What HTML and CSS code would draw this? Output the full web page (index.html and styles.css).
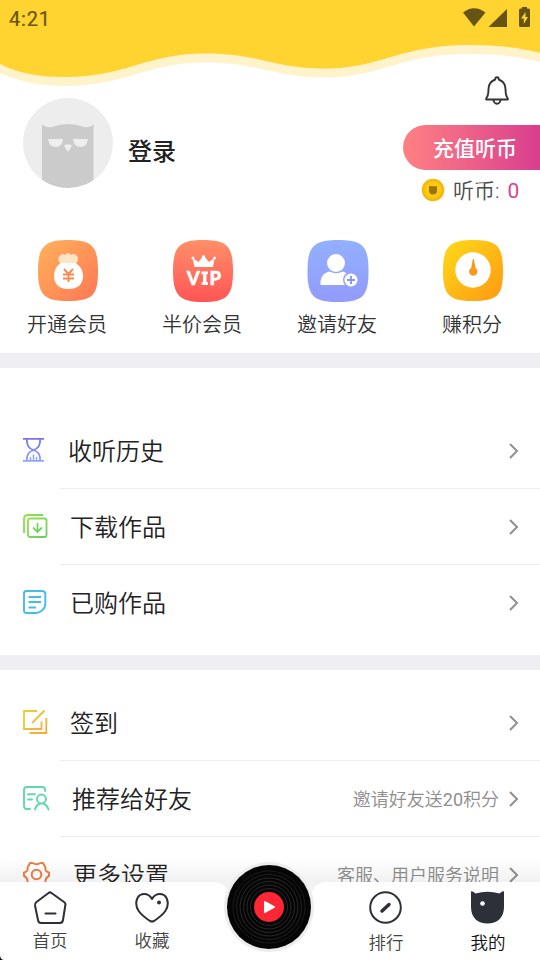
FILE: index.html
```html
<!DOCTYPE html>
<html lang="zh-CN">
<head>
<meta charset="utf-8">
<meta name="viewport" content="width=device-width">
<title>我的</title>
<link rel="stylesheet" href="styles.css">
</head>
<body>
<div class="screen">
  <header class="profile">
    <svg class="wave" width="540" height="90" viewBox="0 0 540 90">
      <path fill="#fff3cc" d="M0 0H540V62C516 56 494 54 470 54C398 54 382 77.500 325 77.500C276 77.500 258 62.500 205 62.500C145 62.500 127 86 65 86C40 86 20 82 0 73Z"/>
      <path fill="#ffd330" d="M0 0H540V53C516 47 494 45 470 45C398 45 382 68.500 325 68.500C276 68.500 258 53.500 205 53.500C145 53.500 127 77 65 77C40 77 20 74 0 64Z"/>
    </svg>
    <div class="status">
      <span class="clock">4:21</span>
      <svg width="70" height="22" viewBox="462 6 70 22" fill="#665414">
        <path d="M463 12.500Q474 4 485.500 12.500L474 26.500Z"/>
        <path d="M507 9V27H488.500Z"/>
        <path fill-rule="evenodd" d="M522 7h5v1.500h1.500q1.500 0 1.500 1.500v15.500q0 1.500-1.500 1.500h-8q-1.500 0-1.500-1.500V10q0-1.500 1.500-1.500H522ZM525.500 12L521 18.500h2.800V24L528 17h-2.500Z"/>
      </svg>
    </div>
    <div class="bell-row">
      <svg width="26" height="32" viewBox="0 0 26 32" fill="none" stroke="#333" stroke-width="1.900" stroke-linejoin="round">
        <path d="M11.200 4.500Q11.200 2.300 13 2.300T14.800 4.500Q21.500 7 21.500 14C21.500 20 22 21.500 23.800 23.300V24.500H2.200V23.300C4 21.500 4.500 20 4.500 14Q4.500 7 11.200 4.500Z"/>
        <path d="M9.500 24.500a3.500 4.200 0 0 0 7 0"/>
      </svg>
    </div>
    <div class="account">
      <svg class="avatar" width="90" height="90" viewBox="0 0 90 90">
        <defs><clipPath id="face"><circle cx="45" cy="45" r="45"/></clipPath></defs>
        <g clip-path="url(#face)">
          <path fill="#ededed" d="M0 0H90V90H0Z"/>
          <path fill="#cbcbcb" d="M19 90V26Q23 30 29 29Q45 23 61 29Q67 30 70.500 26V90Z"/>
          <path fill="#eee" d="M25 41H40Q39 49 32.500 49T25 41ZM50 41H65Q64 49 57.500 49T50 41ZM41 47.500Q45 45 49 47.500L45 54Z"/>
        </g>
      </svg>
      <h1 class="login">登录</h1>
      <div class="wallet">
        <div class="recharge">充值听币</div>
        <div class="balance">
          <svg width="24" height="24" viewBox="0 0 24 24"><circle cx="12" cy="12" r="11.300" fill="#f3b90f"/><circle cx="12" cy="12" r="8.500" fill="#ffca10"/><path fill="#98730f" d="M8 8Q12 8.500 16 8V12Q16 16.500 12 16.500T8 12Z"/></svg>
          <span class="coin-label">听币:</span><span class="coin-value">0</span>
        </div>
      </div>
    </div>
    <nav class="shortcuts">
      <a class="shortcut">
        <svg width="62" height="62" viewBox="0 0 62 62">
          <defs><linearGradient id="g1" x2="1" y2="1"><stop stop-color="#ffb25b"/><stop offset="1" stop-color="#ff7755"/></linearGradient></defs>
          <path fill="url(#g1)" d="M31 0C55 0 61 6 61 31S55 61 31 61S1 55 1 31S7 0 31 0Z"/>
          <path fill="#ffe5c5" d="M23 23Q19 17 24 15Q26 13 28 15Q31 11 34 15Q37 13 39 15Q43 18 39 24Z"/>
          <path fill="#fff" d="M23.500 23H38.500Q46 28 46 36C46 45 40 49 31.500 49S17 45 17 36Q17 28 23.500 23Z"/>
          <path fill="none" stroke="#f68a4d" stroke-width="1.900" d="M27 29L31.500 34L36 29M26 34.500H37M26 38.500H37M31.500 34V42"/>
        </svg><span>开通会员</span>
      </a>
      <a class="shortcut">
        <svg width="62" height="62" viewBox="0 0 62 62">
          <defs><linearGradient id="g2" x2="0" y2="1"><stop stop-color="#ff8f68"/><stop offset="1" stop-color="#ff5555"/></linearGradient></defs>
          <path fill="url(#g2)" d="M31 0C55 0 61 6 61 31S55 62 31 62S1 55 1 31S7 0 31 0Z"/>
          <path fill="#fff" d="M22.500 27L20.500 18L26.500 22L31.500 15.500L37 22L42.500 18L41 27Z"/><g fill="#fff"><circle cx="21" cy="18" r="1.500"/><circle cx="31.500" cy="16.500" r="1.600"/><circle cx="42.500" cy="18" r="1.500"/></g>
          <g class="vip"><text x="14.800" y="45">V</text><text x="37.500" y="45">P</text></g><path fill="#fff" d="M29.500 31.500H36V34.200H34.500V42.300H36V45H29.500V42.300H31V34.200H29.500Z"/>
        </svg><span>半价会员</span>
      </a>
      <a class="shortcut">
        <svg width="62" height="62" viewBox="0 0 62 62">
          <defs><linearGradient id="g3" x2="0" y2="1"><stop stop-color="#93b0ff"/><stop offset="1" stop-color="#929bfa"/></linearGradient></defs>
          <path fill="url(#g3)" d="M31 0C56 0 61.500 6 61.500 31S56 62 31 62S.5 56 .5 31S7 0 31 0Z"/>
          <circle cx="29" cy="23" r="9" fill="#fff"/><path fill="#fff" d="M13.500 45V41Q14.500 33 22.500 31.500Q29.500 35 35.500 31.500Q39.500 32 40.500 35V45Z"/>
          <circle cx="44" cy="40" r="8" fill="#93a3fc"/><circle cx="44" cy="40" r="6.500" fill="#fff"/><path d="M40 40h8M44 36v8" stroke="#8597f5" stroke-width="1.900"/>
        </svg><span>邀请好友</span>
      </a>
      <a class="shortcut">
        <svg width="62" height="62" viewBox="0 0 62 62">
          <defs><linearGradient id="g4" x2="1" y2="1"><stop stop-color="#ffdb19"/><stop offset="1" stop-color="#ff9812"/></linearGradient></defs>
          <path fill="url(#g4)" d="M31 0C55 0 61 6 61 31S55 61 31 61S1 55 1 31S7 0 31 0Z"/>
          <circle cx="31" cy="30" r="17.700" fill="#fff"/><path fill="#f79a1c" d="M30.800 19H31.800L33.500 28Q35.500 29 35.500 31.500A4.200 4.200 0 0 1 27 31.500Q27 29 29.200 28Z"/>
        </svg><span>赚积分</span>
      </a>
    </nav>
  </header>

  <section class="menu history">
    <a class="row">
      <svg class="icon" width="28" height="28" viewBox="0 0 28 28" fill="none" stroke="url(#m1)" stroke-width="1.800">
        <defs><linearGradient id="m1" gradientUnits="userSpaceOnUse" x1="0" y1="1" x2="0" y2="27"><stop stop-color="#7573eb"/><stop offset="1" stop-color="#91aaff"/></linearGradient></defs>
        <path d="M0 1.900L21 1.910M0 23.900L21 23.910M3.800 2C3.800 8 5 11 10.500 13C16 11 17.200 8 17.200 2M10.500 13C5 15 3.800 18 3.800 24M10.500 13C16 15 17.200 18 17.200 24"/>
        <path stroke-width="1.400" d="M7.500 24V20M10.500 24V17.500M13.500 24V20"/>
      </svg><span class="title">收听历史</span><svg class="arrow" width="12" height="18" viewBox="0 0 12 18"><path d="M2 2L9 9L2 16"/></svg>
    </a>
    <a class="row">
      <svg class="icon" width="28" height="28" viewBox="0 0 28 28" fill="none" stroke="url(#m2)" stroke-width="1.800">
        <defs><linearGradient id="m2" x2="1" y2="1"><stop stop-color="#91e344"/><stop offset="1" stop-color="#6ace65"/></linearGradient></defs>
        <rect x="5" y="5.500" width="18.500" height="18.500" rx="2"/><path d="M20 2H5Q1 2 1 6V20M14.500 10V18.500M10 14.500L14.500 19L19 14.500"/>
      </svg><span class="title t2">下载作品</span><svg class="arrow" width="12" height="18" viewBox="0 0 12 18"><path d="M2 2L9 9L2 16"/></svg>
    </a>
    <a class="row">
      <svg class="icon" width="28" height="28" viewBox="0 0 28 28" fill="none" stroke="#43bee9" stroke-width="1.900">
        <path d="M3.500 2H19Q22.300 2 22.300 5V15Q22.300 19 19 21.500Q16 24 13 24H3.500Q1 24 1 21.500V4.500Q1 2 3.500 2ZM5.500 8H18M5.500 13H18M5.500 18.500H13"/>
      </svg><span class="title t2">已购作品</span><svg class="arrow" width="12" height="18" viewBox="0 0 12 18"><path d="M2 2L9 9L2 16"/></svg>
    </a>
  </section>

  <section class="menu more">
    <a class="row">
      <svg class="icon" width="28" height="28" viewBox="0 0 28 28" fill="none" stroke="url(#m4)" stroke-width="1.800">
        <defs><linearGradient id="m4" x2="1" y2="1"><stop stop-color="#eed02e"/><stop offset="1" stop-color="#f5a83e"/></linearGradient></defs>
        <path d="M14 2H1V20H18.500V12.500M9 14L21.500 1.500M23.300 9V24H6.500"/>
      </svg><span class="title t2">签到</span><svg class="arrow" width="12" height="18" viewBox="0 0 12 18"><path d="M2 2L9 9L2 16"/></svg>
    </a>
    <a class="row">
      <svg class="icon" width="28" height="28" viewBox="0 0 28 28" fill="none" stroke="#5fd9aa" stroke-width="1.900" stroke-linecap="round">
        <path d="M7 24H4Q1 24 1 21V5Q1 2 4 2H19Q22.300 2 22.300 6M5 9.300H12M5 14.500H9M12 24.500Q13 20 17 18.500"/><circle cx="18.500" cy="14" r="4.500"/><path d="M20 18.500Q24 20 25.500 24.500"/>
      </svg><span class="title t3">推荐给好友</span><span class="note">邀请好友送<span class="digits">20</span>积分</span><svg class="arrow" width="12" height="18" viewBox="0 0 12 18"><path d="M2 2L9 9L2 16"/></svg>
    </a>
    <a class="row">
      <svg class="icon" width="28" height="28" viewBox="0 0 28 28" fill="none" stroke="#ed7e46" stroke-width="2" stroke-linejoin="round">
        <path d="M7 2H9.500Q13.500 4.500 17.500 2H20L22.500 6.500Q21.500 10.500 26 11.500V15Q22 17 22.500 21L20 25H17.500Q13.500 22.500 9.500 25H7L4.500 21Q5 17 1 15V11.500Q5.500 10.500 4.500 6.500Z"/><circle cx="13.500" cy="13.500" r="4.800"/>
      </svg><span class="title t4">更多设置</span><span class="note">客服、用户服务说明</span><svg class="arrow" width="12" height="18" viewBox="0 0 12 18"><path d="M2 2L9 9L2 16"/></svg>
    </a>
  </section>

  <footer class="tabbar">
    <div class="panel left">
      <a class="tab">
        <svg width="36" height="36" viewBox="0 0 36 36" fill="none" stroke="#2e3038" stroke-width="2" stroke-linejoin="round" stroke-linecap="round"><path d="M16.500 3Q18 1.800 19.500 3L32 12Q34 13.500 33.300 15.500L31 30Q30.500 33 28 33H9Q6.500 33 6 30L3 15.500Q2.500 13.500 4.500 12ZM13.500 23.500H23.500"/></svg><span>首页</span>
      </a>
      <a class="tab">
        <svg width="36" height="36" viewBox="0 0 36 36"><path fill="none" stroke="#2e3038" stroke-width="2" stroke-linejoin="round" d="M18 9C14 2 6 3 3.500 8C-1 18 7 25 16 31Q18 32 20 31C29 25 37 18 32.500 8C30 3 22 2 18 9Z"/><circle cx="25" cy="12.500" r="2" fill="#2e3038"/></svg><span>收藏</span>
      </a>
    </div>
    <div class="gap"></div>
    <div class="panel right">
      <a class="tab">
        <svg width="36" height="36" viewBox="0 0 36 36" fill="none" stroke="#2e3038" stroke-width="2"><circle cx="17.500" cy="17.500" r="15.300"/><path stroke-width="3.500" stroke-linecap="round" d="M14 21L21 14.500"/></svg><span>排行</span>
      </a>
      <a class="tab active">
        <svg width="36" height="36" viewBox="0 0 36 36"><path fill="#2e3038" d="M1 1.500Q2 .5 5.500 3.500Q17.500 0 29.500 3.500Q33 .5 34 1.500V17C34 28 27 33.500 17.500 33.500S1 28 1 17Z"/><circle cx="12.500" cy="13.500" r="2.300" fill="#fff"/></svg><span>我的</span>
      </a>
    </div>
    <svg class="disc" width="94" height="94" viewBox="-47 -47 94 94">
      <circle r="45" fill="#ededed"/><circle r="42" fill="#050505"/>
      <g fill="none" stroke="#2c2c2c" stroke-width=".9"><circle r="18.500"/><circle r="22"/><circle r="25.500"/><circle r="29"/><circle r="32.500" stroke="#242424"/><circle r="36" stroke="#1c1c1c"/></g>
      <circle r="15" fill="#ff2635"/><path fill="#fff" stroke="#fff" stroke-width="2" stroke-linejoin="round" d="M-4-5L5 0L-4 5Z"/>
    </svg>
    <svg class="corner" width="5" height="5" viewBox="0 0 5 5"><path d="M0 0V5H4.500Q0 5 0 0Z"/></svg>
  </footer>
</div>
</body>
</html>
```
FILE: styles.css
```css
* { box-sizing: border-box; }
body { margin: 0; background: #fff; font-family: Roboto, "Noto Sans CJK SC", sans-serif; font-weight: 350; color: #222; }
.screen { position: relative; width: 540px; height: 960px; overflow: hidden; background: #fff; }
svg { display: block; flex: none; }
.profile { position: relative; height: 353px; }
.wave { position: absolute; top: 0; left: 0; }
.status { position: relative; display: flex; justify-content: space-between; height: 38px; padding: 6px 8px 0 9px; }
.clock { font-size: 20px; line-height: 26px; font-weight: 400; letter-spacing: .8px; color: #665414; -webkit-text-stroke: .2px #665414; }
.bell-row { position: relative; display: flex; justify-content: flex-end; height: 60px; padding: 37px 30px 0 0; }
.account { display: flex; height: 142px; padding-left: 23px; position: relative; }
.login { margin: 36px 0 0 15px; font-size: 24px; line-height: 36px; font-weight: 500; }
.wallet { margin-left: auto; width: 137px; padding-top: 27px; }
.recharge { height: 45px; padding-left: 30px; border-radius: 23px 0 0 23px; background: linear-gradient(90deg, #ff8183, #d93e8f); color: #fff; font-size: 21px; line-height: 48px; font-weight: 500; }
.balance { display: flex; align-items: center; height: 40px; padding: 0 0 0 18px; font-size: 21px; line-height: 30px; color: #4c4c4c; }
.coin-label { margin: 1px 0 0 8px; }
.coin-value { margin: 2px 0 0 8px; font-weight: 400; color: #dd438a; }
.shortcuts { display: grid; grid-template-columns: repeat(4, 135px); }
.shortcut { display: flex; flex-direction: column; align-items: center; font-size: 20px; line-height: 30px; color: #333; }
.shortcut span { margin: 8px 0 0 -1px; }
.vip { font: 900 18.5px Lato, sans-serif; fill: #fff; stroke: #fff; stroke-width: .5px; }
.menu { border-top: 15px solid #eeeef3; }
.history { height: 302px; padding-top: 45px; }
.more { padding-top: 15px; }
.row { display: flex; align-items: center; height: 76px; padding: 0 20px 0 23px; background: linear-gradient(#ededed, #ededed) 60px 75px / 480px 1px no-repeat; }
.history .row:last-child, .more .row:last-child { background: none; }
.icon { margin-top: -1px; }
.title { margin: 2px 0 0 17px; font-size: 24px; line-height: 36px; }
.t2 { margin-left: 19px; }
.t3 { margin-left: 21px; }
.t4 { margin-left: 22px; }
.arrow { margin-left: auto; fill: none; stroke: #909090; stroke-width: 2; }
.note { margin: 2px 0 0 auto; font-size: 18px; line-height: 28px; color: #8e8e8e; }
.digits { font-weight: 400; }
.note + .arrow { margin-left: 9px; }
.tabbar { position: absolute; left: 0; bottom: 0; width: 540px; height: 78px; display: flex; background: #fff; }
.tabbar::before { content: ""; position: absolute; left: 0; right: 0; top: -24px; height: 24px; background: linear-gradient(rgba(0, 0, 0, 0), rgba(0, 0, 0, .055)); }
.panel { position: relative; display: flex; background: #fff; height: 78px; }
.left { width: 228px; border-radius: 0 14px 0 0; }
.right { width: 228px; border-radius: 14px 0 0 0; }
.gap { width: 84px; background: linear-gradient(#f1f1f1, #fff 30px); margin: 0 -14px; flex: 1; }
.tab { display: flex; flex-direction: column; align-items: center; width: 102px; padding-top: 8px; font-size: 17.5px; line-height: 26px; color: #444; }
.left .tab:first-child { margin-left: -1px; }
.left .tab span { margin-top: 2px; }
.right .tab:first-child { margin-left: 23px; }
.right .tab span { margin-top: 4px; }
.active { color: #111; }
.disc { position: absolute; left: 222px; top: -22px; }
.corner { position: absolute; left: 0; bottom: 0; }
```
